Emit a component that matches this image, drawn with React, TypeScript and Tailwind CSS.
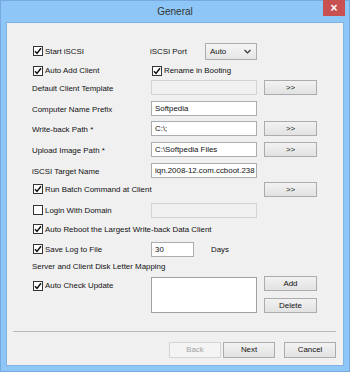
import React from 'react';

const btn =
  'flex items-center justify-center border border-[#acacac] bg-gradient-to-b from-[#f2f2f2] to-[#e2e2e2] text-[#111]';

function Check({ checked }: { checked: boolean }) {
  return (
    <span className="flex h-[10px] w-[10px] shrink-0 items-center justify-center border border-[#333] bg-white">
      {checked && (
        <svg width="8" height="8" viewBox="0 0 8 8">
          <path d="M1 4.2 L3 6.4 L7 1.2" fill="none" stroke="#111" strokeWidth="1.5" />
        </svg>
      )}
    </span>
  );
}

function CheckLabel({ checked, label }: { checked: boolean; label: string }) {
  return (
    <div className="flex items-center gap-[2px] pl-[1px]">
      <Check checked={checked} />
      <span className="whitespace-nowrap">{label}</span>
    </div>
  );
}

function Field({ value = '', disabled = false, w = 'w-[106px]' }: { value?: string; disabled?: boolean; w?: string }) {
  return (
    <div
      className={`flex h-[15px] ${w} shrink-0 items-center overflow-hidden whitespace-nowrap border px-[3px] ${
        disabled ? 'border-[#d4d4d4] bg-[#f0f0f0]' : 'border-[#abadb3] bg-white'
      }`}
    >
      {value}
    </div>
  );
}

function Button({ label, focused = false, className = '' }: { label: string; focused?: boolean; className?: string }) {
  return (
    <div className={`${btn} h-[15px] w-[53px] ${focused ? 'border-[#5d9fe0]' : ''} ${className}`}>{label}</div>
  );
}

function FieldRow({
  label,
  value,
  disabled,
  browse,
  focused,
  mt,
}: {
  label: string;
  value?: string;
  disabled?: boolean;
  browse?: boolean;
  focused?: boolean;
  mt: string;
}) {
  return (
    <div className={`flex h-[15px] items-center ${mt}`}>
      <span className="w-[119px] shrink-0 pt-[2px]">{label}</span>
      <Field value={value} disabled={disabled} />
      {browse && <Button label=">>" focused={focused} className="ml-[7px]" />}
    </div>
  );
}

export default function App() {
  return (
    <div className="flex h-[372px] w-[350px] flex-col border border-[#74aadf] bg-[#8ec7f7] font-['Liberation_Sans',Arial,sans-serif] text-[7.9px] text-[#111]">
      {/* title bar */}
      <div className="relative flex h-[21px] shrink-0 items-center justify-center">
        <span className="text-[10px] text-[#333]">General</span>
        <div className="absolute right-[4px] top-[-1px] flex h-[16px] w-[22px] items-center justify-center bg-[#c75050] text-[12px] font-bold leading-none text-white">
          ×
        </div>
      </div>

      {/* content */}
      <div className="mx-[5px] flex h-[344px] flex-col border border-[#7fb3e6] bg-[#f0f0f0]">
        <div className="flex flex-col pl-[25px]">
          <div className="mt-[20px] flex h-[17px] items-center">
            <div className="w-[118px] shrink-0">
              <CheckLabel checked label="Start iSCSI" />
            </div>
            <span className="w-[55px] shrink-0">iSCSI Port</span>
            <div className="flex h-[17px] w-[52px] items-center justify-between border border-[#acacac] bg-gradient-to-b from-[#f4f4f4] to-[#e6e6e6] pl-[4px] pr-[5px]">
              <span>Auto</span>
              <svg width="7" height="5" viewBox="0 0 7 5">
                <path d="M0.5 1 L3.5 4 L6.5 1" fill="none" stroke="#333" strokeWidth="1.2" />
              </svg>
            </div>
          </div>

          <div className="mt-[3px] flex h-[16px] items-center">
            <div className="w-[119px] shrink-0">
              <CheckLabel checked label="Auto Add Client" />
            </div>
            <CheckLabel checked label="Rename in Booting" />
          </div>

          <FieldRow mt="mt-[1px]" label="Default Client Template" disabled browse />
          <FieldRow mt="mt-[6px]" label="Computer Name Prefix" value="Softpedia" />
          <FieldRow mt="mt-[5px]" label="Write-back Path *" value="C:\;" browse />
          <FieldRow mt="mt-[6px]" label="Upload Image Path *" value="C:\Softpedia Files" browse focused />
          <FieldRow mt="mt-[6px]" label="iSCSI Target Name" value="iqn.2008-12.com.ccboot.238" />

          <div className="mt-[4px] flex h-[15px] items-center">
            <div className="w-[232px] shrink-0">
              <CheckLabel checked label="Run Batch Command at Client" />
            </div>
            <Button label=">>" />
          </div>

          <div className="mt-[6px] flex h-[15px] items-center">
            <div className="w-[119px] shrink-0">
              <CheckLabel checked={false} label="Login With Domain" />
            </div>
            <Field disabled />
          </div>

          <div className="mt-[4px] flex h-[15px] items-center">
            <CheckLabel checked label="Auto Reboot the Largest Write-back Data Client" />
          </div>

          <div className="mt-[5px] flex h-[15px] items-center">
            <div className="w-[119px] shrink-0">
              <CheckLabel checked label="Save Log to File" />
            </div>
            <Field value="30" w="w-[43px]" />
            <span className="ml-[17px]">Days</span>
          </div>

          <div className="mt-[3px] flex h-[14px] items-center">
            <span>Server and Client Disk Letter Mapping</span>
          </div>

          <div className="mt-[2px] flex items-start">
            <div className="mt-[4px] w-[119px] shrink-0">
              <CheckLabel checked label="Auto Check Update" />
            </div>
            <div className="mt-[1px] h-[36px] w-[106px] shrink-0 border border-[#a0a0a0] bg-white" />
            <div className="ml-[7px] flex flex-col gap-[7px]">
              <Button label="Add" />
              <Button label="Delete" />
            </div>
          </div>
        </div>

        <div className="ml-[6px] mr-[7px] mt-[18px] border-t border-[#b9b9b9]" />

        <div className="mr-[7px] mt-[10px] flex justify-end">
          <div className="flex h-[16px] w-[52px] items-center justify-center border border-[#d5d5d5] bg-[#f4f4f4] text-[#a3a3a3]">
            Back
          </div>
          <div className={`${btn} ml-[2px] h-[16px] w-[52px]`}>Next</div>
          <div className={`${btn} ml-[9px] h-[16px] w-[52px]`}>Cancel</div>
        </div>
      </div>
    </div>
  );
}
